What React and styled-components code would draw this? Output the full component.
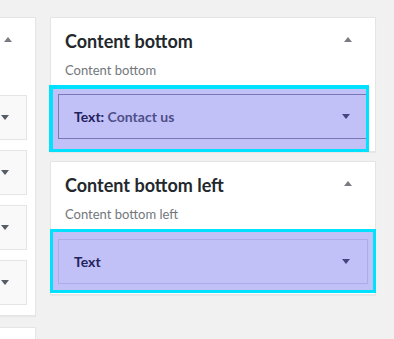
import styled, { createGlobalStyle } from 'styled-components';

const GlobalStyle = createGlobalStyle`
	html, body {
		margin: 0;
		padding: 0;
		background: #f1f1f1;
		overflow: hidden;
	}
	body {
		font-family: Lato, 'Open Sans', sans-serif;
		color: #23282d;
	}
`;

const Page = styled.div`
	display: flex;
	align-items: flex-start;
	gap: 14px;
	margin-left: -290px;
	padding-top: 17px;
`;

const Column = styled.div`
	display: flex;
	flex-direction: column;
	gap: ${(p) => p.$gap}px;
	width: 326px;
	flex-shrink: 0;
`;

const Panel = styled.section`
	box-sizing: border-box;
	width: 326px;
	background: #fff;
	border: 1px solid #e5e5e5;
	box-shadow: 0 1px 1px rgba(0, 0, 0, 0.04);
	padding-bottom: ${(p) => p.$pb || 0}px;
	min-height: ${(p) => p.$minH || 0}px;
`;

const Header = styled.div`
	display: flex;
	align-items: center;
	justify-content: space-between;
	padding: 10px 23px 0 14px;
	height: 26px;
`;

const Title = styled.h2`
	margin: 0;
	font-size: 18px;
	font-weight: 700;
	line-height: 26px;
	color: #23282d;
	white-space: nowrap;
`;

const UpArrow = styled.span`
	width: 0;
	height: 0;
	border-left: 4px solid transparent;
	border-right: 4px solid transparent;
	border-bottom: 5px solid #787c82;
	margin-top: -4px;
`;

const Description = styled.p`
	margin: 0;
	padding: 7px 14px 0;
	font-size: 13px;
	line-height: 18px;
	color: #72777c;
	white-space: nowrap;
`;

const WidgetList = styled.div`
	display: flex;
	flex-direction: column;
	gap: 10px;
	padding: 16px 8px 0;
`;

const DropZone = styled.div`
	box-sizing: border-box;
	background: #c1c1f8;
	border: 3px solid #00e1ff;
	border-width: ${(p) => (p.$thick ? '4px 3px 3px 4px' : '3px')};
	overflow: hidden;
	margin: ${(p) => p.$margin};
	padding: ${(p) => p.$padding};
`;

const Widget = styled.div`
	box-sizing: border-box;
	display: flex;
	align-items: center;
	justify-content: space-between;
	height: 45px;
	padding: 0 17px 0 15px;
	background: ${(p) => (p.$active ? '#c1c1f8' : '#f9f9f9')};
	border: 1px solid ${(p) => (p.$active ? p.$line : '#e5e5e5')};
	width: ${(p) => (p.$width ? `${p.$width}px` : 'auto')};
	flex-shrink: 0;
`;

const WidgetTitle = styled.span`
	font-size: 14px;
	font-weight: 700;
	color: #23235e;
	white-space: nowrap;
`;

const WidgetName = styled.span`
	color: #4e4e88;
`;

const DownArrow = styled.span`
	width: 0;
	height: 0;
	border-left: 4px solid transparent;
	border-right: 4px solid transparent;
	border-top: 5px solid ${(p) => p.$color || '#555d66'};
`;

const sidebarWidgets = ['search', 'recent', 'archives', 'categories'];

export default function App() {
	return (
		<>
			<GlobalStyle />
			<Page>
				<Column $gap={11}>
					<Panel $pb={10}>
						<Header>
							<span />
							<UpArrow />
						</Header>
						<Description>&nbsp;</Description>
						<WidgetList>
							{sidebarWidgets.map((id) => (
								<Widget key={id}>
									<span />
									<DownArrow />
								</Widget>
							))}
						</WidgetList>
					</Panel>
					<Panel $minH={40} />
				</Column>
				<Column $gap={9}>
					<Panel>
						<Header>
							<Title>Content bottom</Title>
							<UpArrow />
						</Header>
						<Description>Content bottom</Description>
						<DropZone
							$thick
							$margin="6px 6px -1px -2px"
							$padding="5px 0 10px 5px"
						>
							<Widget $active $line="#7878b6" $width={310}>
								<WidgetTitle>
									Text: <WidgetName>Contact us</WidgetName>
								</WidgetTitle>
								<DownArrow $color="#45457f" />
							</Widget>
						</DropZone>
					</Panel>
					<Panel $pb={1}>
						<Header>
							<Title>Content bottom left</Title>
							<UpArrow />
						</Header>
						<Description>Content bottom left</Description>
						<DropZone $margin="6px -1px 0 -1px" $padding="7px 5px 6px 5px">
							<Widget $active $line="#acacea">
								<WidgetTitle>Text</WidgetTitle>
								<DownArrow $color="#45457f" />
							</Widget>
						</DropZone>
					</Panel>
				</Column>
			</Page>
		</>
	);
}
